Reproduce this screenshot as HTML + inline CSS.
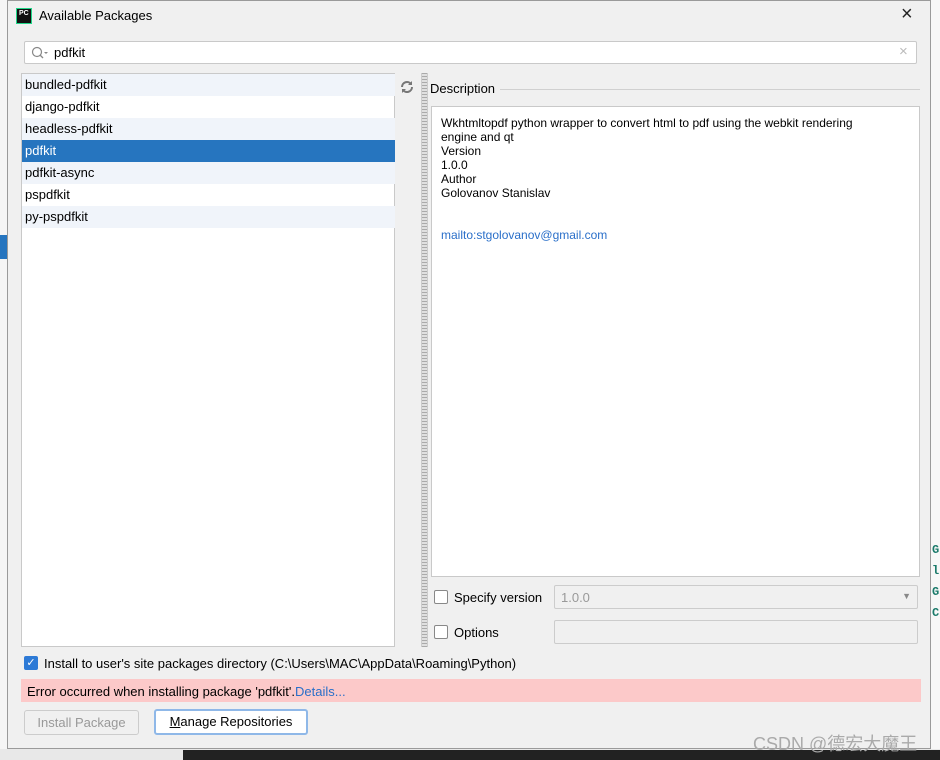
<!DOCTYPE html>
<html><head><style>
*{margin:0;padding:0;box-sizing:border-box}
body{width:940px;height:760px;overflow:hidden;background:#fff;font-family:"Liberation Sans",sans-serif;font-size:13px;color:#000;position:relative}
.a{position:absolute}
.dlg{left:7px;top:0;width:924px;height:749px;background:#f0f0f0;border:1px solid #9a9a9a}
.row{position:absolute;left:0;width:373px;height:22px;line-height:22px;padding-left:3px;font-size:13px}
.cb{position:absolute;width:14px;height:14px;border:1px solid #888;background:#fff;border-radius:2px}
</style></head><body>
<div class="a" style="left:0;top:0;width:7px;height:760px;background:#f5f5f5"></div>
<div class="a" style="left:0;top:235px;width:7px;height:24px;background:#2675bf"></div>
<div class="a" style="left:931px;top:0;width:9px;height:760px;background:#f7f7f7"></div>
<div class="a" style="left:0;top:749px;width:940px;height:11px;background:#e8e8e8"></div>
<div class="a" style="left:183px;top:750px;width:757px;height:10px;background:#222"></div>
<div class="a" style="left:932px;top:540px;font:bold 12px 'Liberation Mono',monospace;color:#1a7a6a;line-height:21px">G<br>l<br>G<br>C</div>
<div class="dlg a">
  <div class="a" style="left:8px;top:7px;width:16px;height:16px;background:#111;border:1px solid #21d789;color:#fff;font:bold 7px 'Liberation Sans';padding:1px 2px">PC</div>
  <div class="a" style="left:31px;top:7px;font-size:13px">Available Packages</div>
  <div class="a" style="left:893px;top:2px;font-size:20px;color:#222">×</div>
  <div class="a" style="left:16px;top:40px;width:893px;height:23px;background:#fff;border:1px solid #c9c9c9;border-radius:2px">
    <svg class="a" style="left:6px;top:4px" width="18" height="14"><circle cx="6" cy="6" r="4.5" fill="none" stroke="#888" stroke-width="1.2"/><line x1="9" y1="9" x2="12" y2="12" stroke="#888" stroke-width="1.3"/><path d="M13 6h4l-2 2z" fill="#888"/></svg>
    <div class="a" style="left:29px;top:3px">pdfkit</div>
    <div class="a" style="left:874px;top:1px;color:#bbb;font-size:15px">×</div>
  </div>
  <div class="a" style="left:13px;top:72px;width:374px;height:574px;background:#fff;border:1px solid #c9c9c9">
    <div class="row" style="top:0;background:#f0f4fa">bundled-pdfkit</div>
    <div class="row" style="top:22px">django-pdfkit</div>
    <div class="row" style="top:44px;background:#f0f4fa">headless-pdfkit</div>
    <div class="row" style="top:66px;background:#2675bf;color:#fff">pdfkit</div>
    <div class="row" style="top:88px;background:#f0f4fa">pdfkit-async</div>
    <div class="row" style="top:110px">pspdfkit</div>
    <div class="row" style="top:132px;background:#f0f4fa">py-pspdfkit</div>
  </div>
  <svg class="a" style="left:392px;top:79px" width="14" height="14"><path d="M2 7a5 5 0 0 1 9-3M12 7a5 5 0 0 1-9 3" fill="none" stroke="#777" stroke-width="2"/><path d="M12 1v4h-4z M2 13v-4h4z" fill="#777"/></svg>
  <div class="a" style="left:413px;top:72px;width:7px;height:574px;background:repeating-linear-gradient(#aaa 0 1px,#e0e0e0 1px 3px);border-left:1px solid #ccc;border-right:1px solid #ccc"></div>
  <div class="a" style="left:422px;top:80px">Description</div>
  <div class="a" style="left:492px;top:88px;width:420px;height:1px;background:#d0d0d0"></div>
  <div class="a" style="left:423px;top:105px;width:489px;height:471px;background:#fff;border:1px solid #c9c9c9;padding:9px 9px;font-size:12px;line-height:14px">Wkhtmltopdf python wrapper to convert html to pdf using the webkit rendering<br>engine and qt<br>Version<br>1.0.0<br>Author<br>Golovanov Stanislav<br><br><br><span style="color:#2a6fc9">mailto:stgolovanov@gmail.com</span></div>
  <div class="cb" style="left:426px;top:589px"></div>
  <div class="a" style="left:446px;top:589px">Specify version</div>
  <div class="a" style="left:546px;top:584px;width:364px;height:24px;border:1px solid #ccc;border-radius:2px;color:#999;padding:4px 6px">1.0.0<span style="position:absolute;right:6px;top:5px;font-size:9px;color:#888">▼</span></div>
  <div class="cb" style="left:426px;top:624px"></div>
  <div class="a" style="left:446px;top:624px">Options</div>
  <div class="a" style="left:546px;top:619px;width:364px;height:24px;border:1px solid #ccc;border-radius:2px"></div>
  <div class="a" style="left:16px;top:655px;width:14px;height:14px;background:#2d7ad6;border-radius:2px;color:#fff;font-size:11px;line-height:14px;text-align:center">✓</div>
  <div class="a" style="left:36px;top:655px">Install to user's site packages directory (C:\Users\MAC\AppData\Roaming\Python)</div>
  <div class="a" style="left:13px;top:678px;width:900px;height:23px;background:#fcc9c9;padding:5px 6px">Error occurred when installing package 'pdfkit'.<span style="color:#2a6fc9">Details...</span></div>
  <div class="a" style="left:16px;top:709px;width:115px;height:25px;border:1px solid #ccc;border-radius:3px;color:#999;text-align:center;line-height:23px">Install Package</div>
  <div class="a" style="left:146px;top:708px;width:154px;height:26px;border:2px solid #8fb8e8;border-radius:3px;background:#fff;text-align:center;line-height:22px"><u>M</u>anage Repositories</div>
  <div class="a" style="left:745px;top:729px;color:#aaa;font:18px 'Liberation Sans','Noto Sans CJK SC',sans-serif">CSDN @德宏大魔王</div>
</div>
</body></html>
